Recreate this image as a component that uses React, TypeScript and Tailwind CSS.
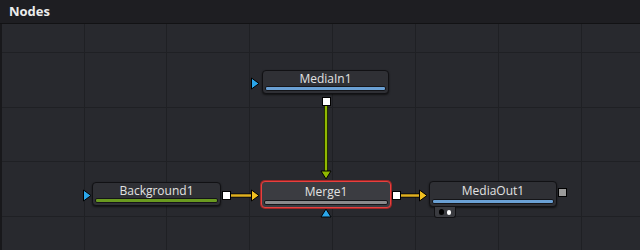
import React from "react";

const font = { fontFamily: '"Open Sans", "Noto Sans", sans-serif' };

function Node({
  x, y, w, h, label, bar, selected,
}: { x: number; y: number; w: number; h: number; label: string; bar: string; selected?: boolean }) {
  const cls = selected
    ? "absolute flex flex-col items-stretch rounded-[4px] border border-[#e8403e] bg-[#3b3c41] shadow-[0_0_0_1px_#a02626]"
    : "absolute flex flex-col items-stretch rounded-[4px] border border-[#111114] bg-[#2f3035] shadow-[0_1px_2px_rgba(0,0,0,0.6)]";
  return (
    <div className={cls} style={{ left: x, top: y, width: w, height: h }}>
      <div className="flex-1 flex items-center justify-center text-[12px] text-[#e2e2e2] leading-none pt-[1px]">
        {label}
      </div>
      <div className="mx-[2px] mb-[2px] h-[5px] rounded-[2px] border border-[#151518]" style={{ background: bar }} />
    </div>
  );
}

export default function App() {
  const vx = [84, 166, 249, 332, 415, 498, 581];
  const hy = [28, 83, 137, 192];
  return (
    <div className="w-[640px] h-[250px] bg-[#28292e] flex flex-col overflow-hidden" style={font}>
      <div className="h-[24px] bg-[#1e1e22] flex items-center px-[9px] border-b border-[#121214]">
        <span className="text-[13px] font-bold text-[#ececec]">Nodes</span>
      </div>
      <div className="relative flex-1 border-l-2 border-[#18181b]">
        <svg className="absolute inset-0" width="640" height="226">
          {vx.map((x) => (
            <line key={x} x1={x - 2 + 0.5} y1={0} x2={x - 2 + 0.5} y2={226} stroke="#1f2024" strokeWidth={1} />
          ))}
          {hy.map((y) => (
            <line key={y} x1={0} y1={y + 0.5} x2={640} y2={y + 0.5} stroke="#1f2024" strokeWidth={1} />
          ))}
        </svg>

        <svg className="absolute inset-0" width="640" height="226">
          <line x1={324} y1={81} x2={324} y2={148} stroke="#000" strokeWidth={4} />
          <line x1={324} y1={81} x2={324} y2={148} stroke="#8fb800" strokeWidth={2.5} />
          <polygon points="319,147 329,147 324,155" fill="#8fb800" stroke="#000" strokeWidth={1} />
          <rect x={320.5} y={73.5} width={8} height={8} fill="#fff" stroke="#000" />

          <polygon points="249.5,54 249.5,65 257,59.5" fill="#2ba6ea" stroke="#000" strokeWidth={1} />

          <polygon points="81.5,166 81.5,177 89,171.5" fill="#2ba6ea" stroke="#000" strokeWidth={1} />
          <line x1={228} y1={171.5} x2={250} y2={171.5} stroke="#000" strokeWidth={4} />
          <line x1={228} y1={171.5} x2={250} y2={171.5} stroke="#e0b020" strokeWidth={2.5} />
          <rect x={220.5} y={167.5} width={8} height={8} fill="#fff" stroke="#000" />
          <polygon points="249.5,166 249.5,177 257,171.5" fill="#f0c020" stroke="#000" strokeWidth={1} />

          <line x1={398} y1={171.5} x2={419} y2={171.5} stroke="#000" strokeWidth={4} />
          <line x1={398} y1={171.5} x2={419} y2={171.5} stroke="#e0b020" strokeWidth={2.5} />
          <rect x={390.5} y={167.5} width={8} height={8} fill="#fff" stroke="#000" />
          <polygon points="417.5,166 417.5,177 425,171.5" fill="#f0c020" stroke="#000" strokeWidth={1} />

          <polygon points="319,193 329,193 324,185" fill="#2ba6ea" stroke="#000" strokeWidth={1} />

          <rect x={556.5} y={164.5} width={8} height={8} fill="#9a9a9a" stroke="#000" />
        </svg>

        <Node x={260} y={46} w={127} h={24} label="MediaIn1" bar="#6aa0d4" />
        <Node x={90} y={158} w={129} h={24} label="Background1" bar="#6a9a20" />
        <Node x={259} y={157} w={130} h={27} label="Merge1" bar="#8a8a8c" selected />
        <Node x={427} y={157} w={128} h={26} label="MediaOut1" bar="#6aa0d4" />

        <div className="absolute flex items-center gap-[3px] px-[4px] rounded-b-[3px] bg-[#3a3b40] border border-t-0 border-[#111114]" style={{ left: 432, top: 183, width: 22, height: 11 }}>
          <span className="w-[6px] h-[6px] rounded-full bg-[#000]" />
          <span className="w-[5px] h-[5px] rounded-full bg-[#fff]" />
        </div>
      </div>
    </div>
  );
}
